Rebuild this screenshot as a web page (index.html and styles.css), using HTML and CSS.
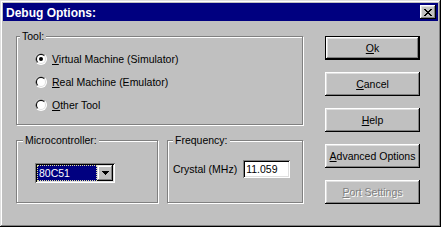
FILE: index.html
```html
<!DOCTYPE html>
<html>
<head>
<meta charset="utf-8">
<link rel="stylesheet" href="styles.css">
</head>
<body>
<div class="window">
  <div class="titlebar">
    <span class="title">Debug Options:</span>
    <span class="close">
      <svg width="8" height="7" viewBox="0 0 8 7" shape-rendering="crispEdges"><path fill="#000" d="M0 0h2v1H0z M6 0h2v1H6z M1 1h2v1H1z M5 1h2v1H5z M2 2h4v1H2z M3 3h2v1H3z M2 4h4v1H2z M1 5h2v1H1z M5 5h2v1H5z M0 6h2v1H0z M6 6h2v1H6z"/></svg>
    </span>
  </div>
  <div class="content">
    <div class="left-col">
      <div class="group tool">
        <span class="glabel glabel-tool">Tool:</span>
        <div class="radio-row">
          <svg class="radio" width="12" height="12" viewBox="0 0 12 12"><circle cx="6" cy="6" r="6" fill="#fff"/><path d="M1.76 10.24A6 6 0 0 1 10.24 1.76Z" fill="#808080"/><circle cx="6" cy="6" r="5" fill="#dfdfdf"/><path d="M2.46 9.54A5 5 0 0 1 9.54 2.46Z" fill="#000"/><circle cx="6" cy="6" r="4" fill="#fff"/><circle cx="6" cy="6" r="2" fill="#000"/></svg>
          <span><u>V</u>irtual Machine (Simulator)</span>
        </div>
        <div class="radio-row">
          <svg class="radio" width="12" height="12" viewBox="0 0 12 12"><circle cx="6" cy="6" r="6" fill="#fff"/><path d="M1.76 10.24A6 6 0 0 1 10.24 1.76Z" fill="#808080"/><circle cx="6" cy="6" r="5" fill="#dfdfdf"/><path d="M2.46 9.54A5 5 0 0 1 9.54 2.46Z" fill="#000"/><circle cx="6" cy="6" r="4" fill="#fff"/></svg>
          <span><u>R</u>eal Machine (Emulator)</span>
        </div>
        <div class="radio-row">
          <svg class="radio" width="12" height="12" viewBox="0 0 12 12"><circle cx="6" cy="6" r="6" fill="#fff"/><path d="M1.76 10.24A6 6 0 0 1 10.24 1.76Z" fill="#808080"/><circle cx="6" cy="6" r="5" fill="#dfdfdf"/><path d="M2.46 9.54A5 5 0 0 1 9.54 2.46Z" fill="#000"/><circle cx="6" cy="6" r="4" fill="#fff"/></svg>
          <span><u>O</u>ther Tool</span>
        </div>
      </div>
      <div class="lower">
        <div class="group micro">
          <span class="glabel glabel-micro">Microcontroller:</span>
          <div class="combo">
            <div class="combo-field"><span class="combo-sel">80C51</span></div>
            <div class="combo-btn">
              <svg width="7" height="4" viewBox="0 0 7 4" shape-rendering="crispEdges"><path fill="#000" d="M0 0h7v1H0z M1 1h5v1H1z M2 2h3v1H2z M3 3h1v1H3z"/></svg>
            </div>
          </div>
        </div>
        <div class="group freq">
          <span class="glabel glabel-freq">Frequency:</span>
          <div class="crystal">
            <span>Crystal (MHz)</span>
            <div class="num">11.059</div>
          </div>
        </div>
      </div>
    </div>
    <div class="buttons">
      <div class="btn btn-default"><span><u>O</u>k</span></div>
      <div class="btn"><span><u>C</u>ancel</span></div>
      <div class="btn"><span><u>H</u>elp</span></div>
      <div class="btn"><span><u>A</u>dvanced Options</span></div>
      <div class="btn btn-disabled"><span><u>P</u>ort Settings</span></div>
    </div>
  </div>
</div>
</body>
</html>
```
FILE: styles.css
```css
html, body {
  margin: 0;
  padding: 0;
  background: #c0c0c0;
}
body {
  font-family: "Liberation Sans", Arial, sans-serif;
  font-size: 10.5px;
  color: #000;
}
.window {
  width: 441px;
  height: 227px;
  box-sizing: border-box;
  padding: 3px;
  background: #c0c0c0;
  box-shadow: inset -1px -1px 0 #000, inset 1px 1px 0 #dfdfdf, inset -2px -2px 0 #808080, inset 2px 2px 0 #fff;
}
.titlebar {
  height: 18px;
  background: #000080;
  display: flex;
  align-items: center;
  justify-content: space-between;
  padding: 0 2px 0 3px;
}
.title {
  color: #fff;
  font-weight: bold;
  font-size: 12px;
  line-height: 18px;
  padding-top: 1px;
}
.close {
  width: 16px;
  height: 14px;
  box-sizing: border-box;
  background: #c0c0c0;
  display: flex;
  align-items: center;
  justify-content: center;
  box-shadow: inset -1px -1px 0 #000, inset 1px 1px 0 #fff, inset -2px -2px 0 #808080, inset 2px 2px 0 #dfdfdf;
}
.close svg { display: block; }
.content {
  display: flex;
  padding: 15px 0 0 13px;
}
.left-col {
  width: 287px;
}
.group {
  position: relative;
  box-sizing: border-box;
  border: 1px solid #808080;
  box-shadow: inset 1px 1px 0 #fff, 1px 1px 0 #fff;
}
.glabel {
  position: absolute;
  top: -7px;
  padding: 0 2px;
  line-height: 13px;
  background: #c0c0c0;
  white-space: nowrap;
}
.glabel-tool { left: 3px; }
.glabel-micro { left: 6px; }
.glabel-freq { left: 5px; }
.tool {
  height: 89px;
  padding: 10px 0 0 18px;
}
.radio-row {
  display: flex;
  align-items: center;
  gap: 5px;
  height: 23px;
}
.radio { display: block; flex: none; }
.lower {
  display: flex;
  gap: 9px;
  margin-top: 15px;
}
.micro {
  width: 142px;
  height: 63px;
  padding: 22px 0 0 18px;
}
.freq {
  width: 136px;
  height: 63px;
  padding: 19px 0 0 5px;
}
.combo {
  width: 80px;
  height: 20px;
  box-sizing: border-box;
  padding: 2px;
  background: #fff;
  display: flex;
  box-shadow: inset 1px 1px 0 #808080, inset -1px -1px 0 #fff, inset 2px 2px 0 #000, inset -2px -2px 0 #dfdfdf;
}
.combo-field {
  flex: 1;
  background: #000080;
  color: #fff;
  box-sizing: border-box;
  border: 1px dotted #e0e0a0;
  display: flex;
  align-items: center;
  padding-left: 1px;
  line-height: 14px;
}
.combo-btn {
  width: 16px;
  height: 16px;
  box-sizing: border-box;
  background: #c0c0c0;
  display: flex;
  align-items: center;
  justify-content: center;
  box-shadow: inset -1px -1px 0 #000, inset 1px 1px 0 #dfdfdf, inset -2px -2px 0 #808080, inset 2px 2px 0 #fff;
}
.combo-btn svg { display: block; }
.crystal {
  display: flex;
  align-items: center;
  gap: 6px;
}
.num {
  width: 47px;
  height: 18px;
  box-sizing: border-box;
  background: #fff;
  padding: 0 0 0 3px;
  line-height: 18px;
  box-shadow: inset 1px 1px 0 #808080, inset -1px -1px 0 #fff, inset 2px 2px 0 #000, inset -2px -2px 0 #dfdfdf;
}
.buttons {
  display: flex;
  flex-direction: column;
  gap: 12px;
  margin-left: 22px;
}
.btn {
  width: 95px;
  height: 24px;
  box-sizing: border-box;
  display: flex;
  align-items: center;
  justify-content: center;
  box-shadow: inset -1px -1px 0 #000, inset 1px 1px 0 #fff, inset -2px -2px 0 #808080, inset 2px 2px 0 #dfdfdf;
  white-space: nowrap;
}
.btn-default {
  border: 1px solid #000;
}
.btn-disabled {
  color: #808080;
  text-shadow: 1px 1px 0 #fff;
}
u { text-decoration: underline; text-underline-offset: 1px; }
```
